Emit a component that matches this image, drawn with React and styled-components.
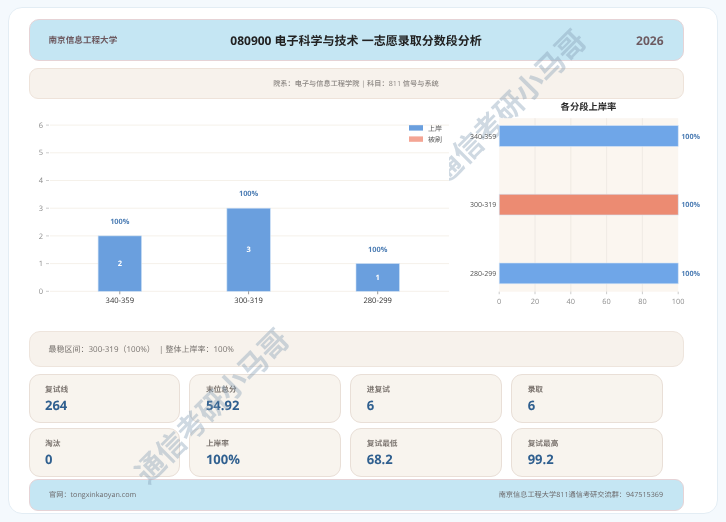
import React from "react";
import styled, { createGlobalStyle } from "styled-components";

const FONT = `"Open Sans", "Noto Sans CJK SC", sans-serif`;

const Global = createGlobalStyle`
  html, body { margin: 0; padding: 0; background: #f4f9fd; font-family: ${FONT}; text-rendering: geometricPrecision; }
`;
const Page = styled.div`
  width: 726px; height: 522px; box-sizing: border-box; padding: 7px 8px 8px;
  position: relative; overflow: hidden; filter: blur(0.3px);
`;
const Sheet = styled.div`
  height: 507px; box-sizing: border-box; padding: 11px 33.5px 0 19.5px;
  background: #fff; border: 1px solid #e3edf4; border-radius: 14px;
  display: flex; flex-direction: column;
`;
const Header = styled.header`
  height: 42px; flex: none; box-sizing: border-box; padding: 0 19px;
  background: #c5e6f3; border: 1px solid #e6d3d6; border-radius: 10px;
  display: grid; grid-template-columns: 1fr auto 1fr; align-items: center;
`;
const School = styled.div`font-size: 8.6px; font-weight: 700; color: #6d5a60;`;
const Title = styled.h1`margin: 0; font-size: 12px; font-weight: 700; color: #222;`;
const Year = styled.div`font-size: 12px; font-weight: 700; color: #6d5a60; text-align: right;`;
const SubBar = styled.div`
  margin-top: 7px; height: 31px; flex: none; box-sizing: border-box;
  background: #f7f2ec; border: 1px solid #eee3da; border-radius: 9px;
  display: flex; align-items: center; justify-content: center;
  font-size: 7.2px; font-weight: 500; color: #8b8682;
`;
const Charts = styled.div`
  height: 232px; flex: none; display: flex; margin: 0 -20px 0 -0.5px;
  position: relative; z-index: 2;
`;
const LeftSvg = styled.svg`display: block; flex: none; background: #fff;`;
const RightSvg = styled.svg`display: block; flex: none; overflow: visible;`;
const Summary = styled.div`
  height: 36px; flex: none; box-sizing: border-box; padding: 0 19px;
  background: #f7f2ec; border: 1px solid #eee5dd; border-radius: 11px;
  display: flex; align-items: center; font-size: 8px; color: #77726e; white-space: pre;
`;
const Stats = styled.div`
  margin: 7px 21px 0 0; flex: none;
  display: grid; grid-template-columns: repeat(4, 1fr); column-gap: 9.5px; row-gap: 5px;
`;
const Stat = styled.div`
  height: 49px; box-sizing: border-box; padding: 9px 15.5px 0;
  background: #f8f4ee; border: 1px solid #e9dfd7; border-radius: 11px;
`;
const Label = styled.div`font-size: 7.7px; line-height: 12px; font-weight: 700; color: #7d7671;`;
const Value = styled.div`font-size: 13px; line-height: 18px; font-weight: 700; color: #2f5f8f;`;
const Footer = styled.footer`
  margin-top: 2px; height: 32px; flex: none; box-sizing: border-box; padding: 0 19.5px;
  background: #c5e6f3; border: 1px solid #e6d3d6; border-radius: 9px;
  display: flex; align-items: center; justify-content: space-between;
  font-size: 7.2px; color: #6c6a6c;
`;
const Watermark = styled.div`
  position: absolute; left: ${(p) => p.$x}px; top: ${(p) => p.$y}px; z-index: ${(p) => p.$z};
  transform: translate(-50%, -50%) rotate(-45deg);
  font-size: 29px; font-weight: 700; line-height: 1; white-space: nowrap;
  color: rgba(130, 155, 180, 0.38); pointer-events: none;
`;

const T = styled.text`font-family: ${FONT};`;

const BLUE = "#6a9fde";
const left = [
  { name: "340-359", v: 2, x: 119.8 },
  { name: "300-319", v: 3, x: 248.6 },
  { name: "280-299", v: 1, x: 377.7 },
];
const right = [
  { name: "340-359", y: 136, c: "#6fa6e8" },
  { name: "300-319", y: 204.6, c: "#ec8b72" },
  { name: "280-299", y: 273.4, c: "#6fa6e8" },
];

function BarChart() {
  const oy = 291.3, unit = 27.7;
  return (
    <LeftSvg width="420.5" height="232" viewBox="28 99 420.5 232">
      {[0, 1, 2, 3, 4, 5, 6].map((n) => {
        const y = oy - n * unit;
        return (
          <g key={n}>
            <line x1="50" x2="449" y1={y} y2={y} stroke="#f5f1ea" strokeWidth="1" />
            <line x1="46" x2="49" y1={y} y2={y} stroke="#aaa" strokeWidth="0.6" />
            <T x="41" y={y + 2.6} fontSize="7.5" fill="#8a8a8a" textAnchor="middle">{n}</T>
          </g>
        );
      })}
      {left.map((b) => (
        <g key={b.name}>
          <rect x={b.x - 21.7} y={oy - b.v * unit} width="43.4" height={b.v * unit} fill={BLUE} stroke="#c9def5" strokeWidth="0.6" />
          <T x={b.x} y={oy - (b.v * unit) / 2 + 2.6} fontSize="7.5" fontWeight="700" fill="#fff" textAnchor="middle">{b.v}</T>
          <T x={b.x} y={oy - b.v * unit - 12} fontSize="7.4" fontWeight="700" fill="#4f7fb5" textAnchor="middle">100%</T>
          <line x1={b.x} x2={b.x} y1={oy} y2={oy + 3} stroke="#555" strokeWidth="0.6" />
          <T x={b.x} y={oy + 11.3} fontSize="7.6" fill="#333" textAnchor="middle">{b.name}</T>
        </g>
      ))}
      <rect x="409" y="125.2" width="14" height="5.4" fill={BLUE} />
      <T x="428" y="130.8" fontSize="7" fill="#555">上岸</T>
      <rect x="409" y="136.4" width="14" height="5.4" fill="#f4a594" />
      <T x="428" y="141.8" fontSize="7" fill="#555">被刷</T>
    </LeftSvg>
  );
}

function RateChart() {
  const x0 = 498.7, w = 179, top = 118.2, bottom = 291.7;
  return (
    <RightSvg width="251.5" height="232" viewBox="448.5 99 251.5 232">
      <T x="588" y="110" fontSize="9.3" fontWeight="700" fill="#2a2a2a" textAnchor="middle">各分段上岸率</T>
      <rect x={x0} y={top} width={w} height={bottom - top} fill="#fbf6f0" />
      {[0, 20, 40, 60, 80, 100].map((n) => {
        const x = x0 + (n / 100) * w;
        return (
          <g key={n}>
            {n > 0 && n < 100 && <line x1={x} x2={x} y1={top} y2={bottom} stroke="#ece7e1" strokeWidth="0.8" />}
            <line x1={x} x2={x} y1={bottom} y2={bottom + 2.5} stroke="#aaa" strokeWidth="0.6" />
            <T x={x} y={bottom + 12.4} fontSize="7.4" fill="#8d8d8d" textAnchor="middle">{n}</T>
          </g>
        );
      })}
      {right.map((b) => (
        <g key={b.name}>
          <rect x={x0} y={b.y - 10.4} width={w} height="20.8" fill={b.c} stroke="#d3e3f5" strokeWidth="0.6" />
          <T x={x0 - 2.8} y={b.y + 2.5} fontSize="7" fill="#555" textAnchor="end">{b.name}</T>
          <T x={x0 + w + 3} y={b.y + 2.5} fontSize="7.2" fontWeight="700" fill="#4f7fb5">100%</T>
        </g>
      ))}
    </RightSvg>
  );
}

const stats = [
  ["复试线", "264"], ["末位总分", "54.92"], ["进复试", "6"], ["录取", "6"],
  ["淘汰", "0"], ["上岸率", "100%"], ["复试最低", "68.2"], ["复试最高", "99.2"],
];

export default function App() {
  return (
    <Page>
      <Global />
      <Sheet>
        <Header>
          <School>南京信息工程大学</School>
          <Title>080900 电子科学与技术 一志愿录取分数段分析</Title>
          <Year>2026</Year>
        </Header>
        <SubBar>院系：电子与信息工程学院 | 科目：811 信号与系统</SubBar>
        <Charts>
          <BarChart />
          <RateChart />
        </Charts>
        <Summary>最稳区间：300-319（100%）  | 整体上岸率：100%</Summary>
        <Stats>
          {stats.map(([k, v]) => (
            <Stat key={k}>
              <Label>{k}</Label>
              <Value>{v}</Value>
            </Stat>
          ))}
        </Stats>
        <Footer>
          <span>官网：tongxinkaoyan.com</span>
          <span>南京信息工程大学811通信考研交流群：947515369</span>
        </Footer>
      </Sheet>
      <Watermark $x={508.5} $y={106.5} $z={1}>通信考研小马哥</Watermark>
      <Watermark $x={211.5} $y={406} $z={3}>通信考研小马哥</Watermark>
    </Page>
  );
}
